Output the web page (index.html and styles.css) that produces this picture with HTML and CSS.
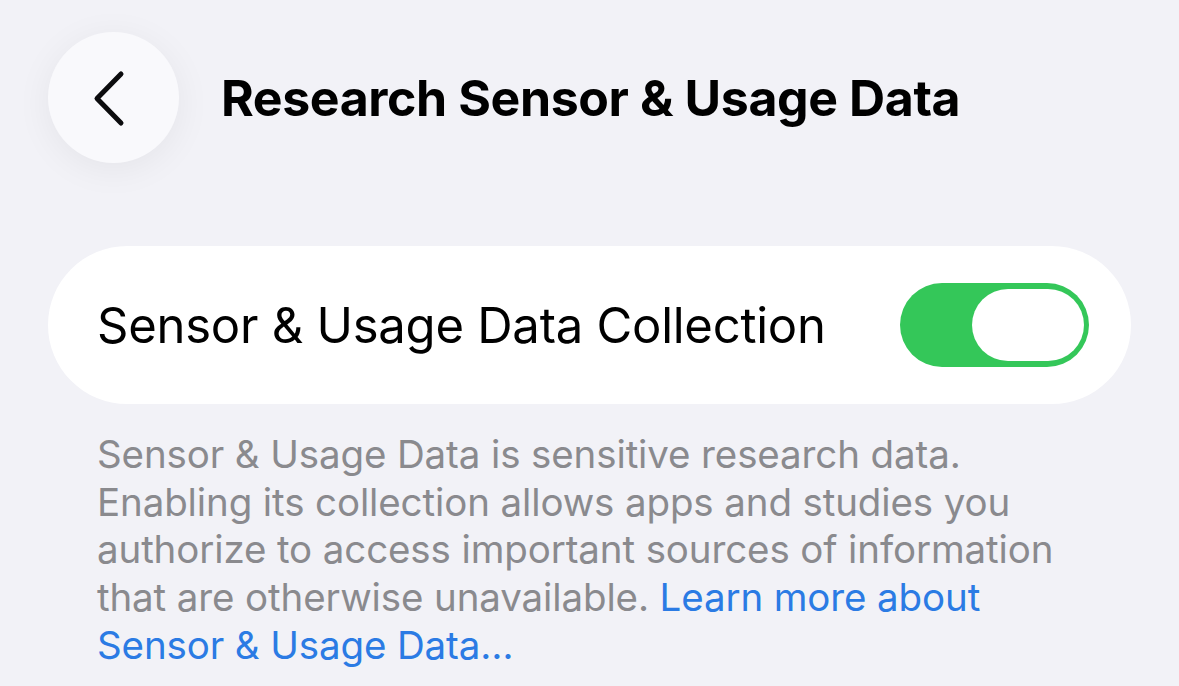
FILE: index.html
```html
<!DOCTYPE html>
<html lang="en">
<head>
<meta charset="utf-8">
<title>Research Sensor &amp; Usage Data</title>
<link rel="stylesheet" href="styles.css">
</head>
<body>
<div class="screen">
  <header class="nav">
    <button class="back" aria-label="Back">
      <svg width="40" height="60" viewBox="0 0 40 60" aria-hidden="true">
        <path d="M31 6 L7 30.5 L31 55" fill="none" stroke="#0c0c0e" stroke-width="5" stroke-linecap="round" stroke-linejoin="round"/>
      </svg>
    </button>
    <h1 class="title">Research Sensor &amp; Usage Data</h1>
  </header>

  <section class="card">
    <span class="row-label">Sensor &amp; Usage Data Collection</span>
    <span class="toggle on"><span class="thumb"></span></span>
  </section>

  <p class="footer">Sensor &amp; Usage Data is sensitive research data. Enabling its collection allows apps and studies you authorize to access important sources of information that are otherwise unavailable. <a class="link" href="#">Learn more about Sensor &amp; Usage Data…</a></p>
</div>
</body>
</html>
```

FILE: styles.css
```css
* { box-sizing: border-box; }
html, body {
  margin: 0;
  padding: 0;
  background: #f2f2f7;
}
body {
  font-family: Inter, "Noto Sans", "Liberation Sans", sans-serif;
  color: #000;
  width: 1179px;
  height: 686px;
  overflow: hidden;
}
.screen {
  padding: 32px 48px 0 48px;
  display: flex;
  flex-direction: column;
}
.nav {
  display: flex;
  align-items: center;
  gap: 42px;
  height: 131px;
}
.back {
  width: 131px;
  height: 131px;
  border-radius: 50%;
  border: none;
  padding: 0;
  background: #f9f9fc;
  box-shadow: 0 6px 36px rgba(0, 0, 0, 0.06);
  display: flex;
  align-items: center;
  justify-content: center;
  flex: none;
}
.back svg {
  margin-left: -8px;
}
.title {
  margin: 0;
  font-size: 50px;
  font-weight: 700;
  letter-spacing: -0.4px;
  line-height: 1;
}
.card {
  margin-top: 83px;
  height: 158px;
  background: #fff;
  border-radius: 79px;
  display: flex;
  align-items: center;
  justify-content: space-between;
  padding: 0 42px 0 49px;
}
.row-label {
  font-size: 49px;
  font-weight: 400;
  letter-spacing: -0.25px;
}
.toggle {
  width: 189px;
  height: 84px;
  border-radius: 42px;
  background: #34c759;
  display: flex;
  align-items: center;
  justify-content: flex-end;
  padding-right: 5px;
  flex: none;
}
.thumb {
  width: 112px;
  height: 72px;
  border-radius: 36px;
  background: #fff;
}
.footer {
  margin: 27px 0 0 0;
  padding: 0 49px;
  font-size: 38.5px;
  line-height: 47.7px;
  color: #8a8a8e;
  letter-spacing: -0.12px;
}
.link {
  color: #2b7be4;
  text-decoration: none;
}
```
